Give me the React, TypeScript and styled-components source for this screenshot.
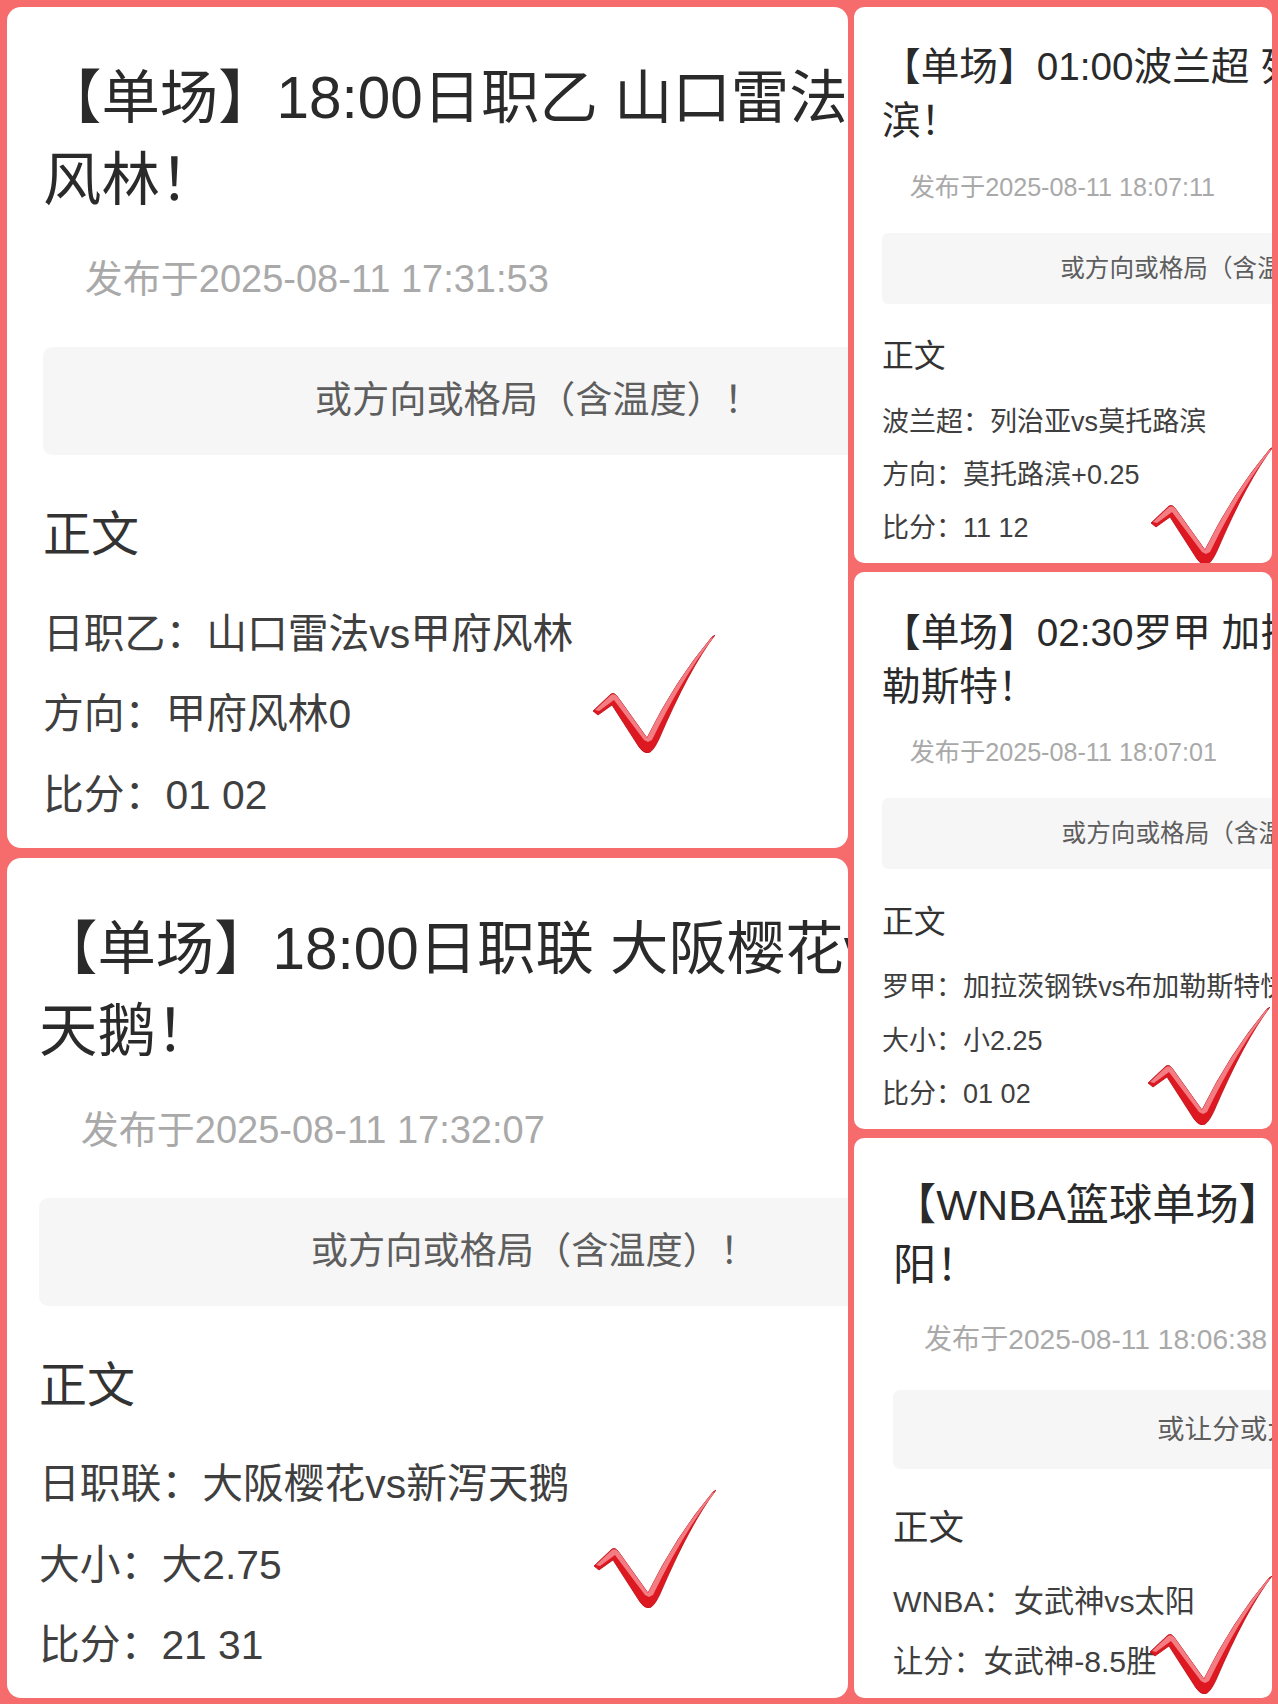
import styled, { createGlobalStyle } from "styled-components"

const GlobalStyle = createGlobalStyle`
  html, body {
    margin: 0;
    padding: 0;
    background: #f66b6b;
  }
  body {
    font-family: "Liberation Sans", "Noto Sans CJK SC", sans-serif;
  }
`

const Page = styled.main`
  box-sizing: border-box;
  width: 1278px;
  height: 1704px;
  padding: 7px 6px 6px 7px;
  display: grid;
  grid-template-columns: 841px 418px;
  column-gap: 6px;
  background: #f66b6b;
`

const Column = styled.div<{ $gap: number }>`
  display: flex;
  flex-direction: column;
  gap: ${(p) => p.$gap}px;
  min-height: 0;
`

const Card = styled.article<{ $base: number; $pad: number; $radius: number }>`
  position: relative;
  flex: 1;
  min-height: 0;
  box-sizing: border-box;
  overflow: hidden;
  background: #fff;
  border-radius: ${(p) => p.$radius}px;
  font-size: ${(p) => p.$base}px;
  padding: 1.25em 0 0 ${(p) => p.$pad}px;
`

// flex column so the margins between blocks add up instead of collapsing
const Content = styled.div<{ $w: number }>`
  display: flex;
  flex-direction: column;
  width: ${(p) => p.$w}em;
`

const Title = styled.h2`
  margin: 0;
  font-size: 1.46em;
  line-height: 1.404;
  font-weight: 400;
  color: #2a2a2a;
  white-space: nowrap;
`

const Published = styled.div`
  margin-top: 0.8em;
  padding-left: 1.1em;
  font-size: 0.95em;
  line-height: 1.5;
  color: #a9a9a9;
  white-space: nowrap;
`

const Summary = styled.div`
  margin-top: 1.05em;
  height: 2.9em;
  font-size: 0.93em;
  line-height: 2.9em;
  text-align: center;
  color: #5e5e5e;
  background: #f6f6f6;
  border-radius: 0.25em;
  white-space: nowrap;
`

const SectionHead = styled.h3`
  margin: 0.92em 0 0.27em;
  font-size: 1.2em;
  line-height: 1.5;
  font-weight: 400;
  color: #333;
`

const Line = styled.p`
  margin: 0.5em 0 0;
  font-size: 1.02em;
  line-height: 1.47;
  color: #3f3f3f;
  white-space: nowrap;
`

const Tick = styled.svg<{ $x: number; $y: number }>`
  position: absolute;
  left: ${(p) => p.$x}px;
  top: ${(p) => p.$y}px;
  width: 122px;
  height: 118px;
  pointer-events: none;
`

type Post = {
  title: [string, string]
  date: string
  summary: string
  lines: string[]
  base: number
  pad: number
  radius: number
  width: number
  tick: [number, number]
}

const left: Post[] = [
  {
    title: ["【单场】18:00日职乙 山口雷法vs甲府", "风林！"],
    date: "发布于2025-08-11 17:31:53",
    summary: "或方向或格局（含温度）！",
    lines: ["日职乙：山口雷法vs甲府风林", "方向：甲府风林0", "比分：01 02"],
    base: 40,
    pad: 36,
    radius: 14,
    width: 24.75,
    tick: [586, 628],
  },
  {
    title: ["【单场】18:00日职联 大阪樱花vs新泻", "天鹅！"],
    date: "发布于2025-08-11 17:32:07",
    summary: "或方向或格局（含温度）！",
    lines: ["日职联：大阪樱花vs新泻天鹅", "大小：大2.75", "比分：21 31"],
    base: 40,
    pad: 32,
    radius: 14,
    width: 24.75,
    tick: [587, 632],
  },
]

const right: Post[] = [
  {
    title: ["【单场】01:00波兰超 列治亚vs莫托路", "滨！"],
    date: "发布于2025-08-11 18:07:11",
    summary: "或方向或格局（含温度）！",
    lines: ["波兰超：列治亚vs莫托路滨", "方向：莫托路滨+0.25", "比分：11 12"],
    base: 26.5,
    pad: 28,
    radius: 10,
    width: 24.6,
    tick: [297, 440],
  },
  {
    title: ["【单场】02:30罗甲 加拉茨钢铁vs布加", "勒斯特！"],
    date: "发布于2025-08-11 18:07:01",
    summary: "或方向或格局（含温度）！",
    lines: ["罗甲：加拉茨钢铁vs布加勒斯特快速", "大小：小2.25", "比分：01 02"],
    base: 26.5,
    pad: 28,
    radius: 10,
    width: 24.7,
    tick: [294, 435],
  },
  {
    title: ["【WNBA篮球单场】女武神vs太", "阳！"],
    date: "发布于2025-08-11 18:06:38",
    summary: "或让分或大小（含温度）！",
    lines: ["WNBA：女武神vs太阳", "让分：女武神-8.5胜"],
    base: 29.6,
    pad: 39,
    radius: 10,
    width: 29,
    tick: [296, 438],
  },
]

function CheckMark({ x, y }: { x: number; y: number }) {
  return (
    <Tick $x={x} $y={y} viewBox="0 0 122 118">
      <path
        d="M0,76 L18,59 Q21,57 24,61 L54,103 Q82,46 119,2 L122,0 Q96,34 66,104 Q60,117 55,118 Q50,118 46,112 L19,70 L5,80 Z"
        fill="#de1820"
        stroke="#b80f16"
        strokeWidth="0.8"
        strokeLinejoin="round"
      />
      <path
        d="M2,75 L18,60 Q21,58 24,61 L54,103 Q82,46 119,2 L120,3 Q88,45 59,105 L55,107 L51,105 L21,65 L6,76 Z"
        fill="#f47c83"
      />
    </Tick>
  )
}

function PostCard({ post }: { post: Post }) {
  return (
    <Card $base={post.base} $pad={post.pad} $radius={post.radius}>
      <Content $w={post.width}>
        <Title>
          {post.title[0]}
          <br />
          {post.title[1]}
        </Title>
        <Published>{post.date}</Published>
        <Summary>{post.summary}</Summary>
        <SectionHead>正文</SectionHead>
        {post.lines.map((line) => (
          <Line key={line}>{line}</Line>
        ))}
      </Content>
      <CheckMark x={post.tick[0]} y={post.tick[1]} />
    </Card>
  )
}

export default function App() {
  return (
    <>
      <GlobalStyle />
      <Page>
        <Column $gap={10}>
          {left.map((post) => (
            <PostCard key={post.date} post={post} />
          ))}
        </Column>
        <Column $gap={9}>
          {right.map((post) => (
            <PostCard key={post.date} post={post} />
          ))}
        </Column>
      </Page>
    </>
  )
}
